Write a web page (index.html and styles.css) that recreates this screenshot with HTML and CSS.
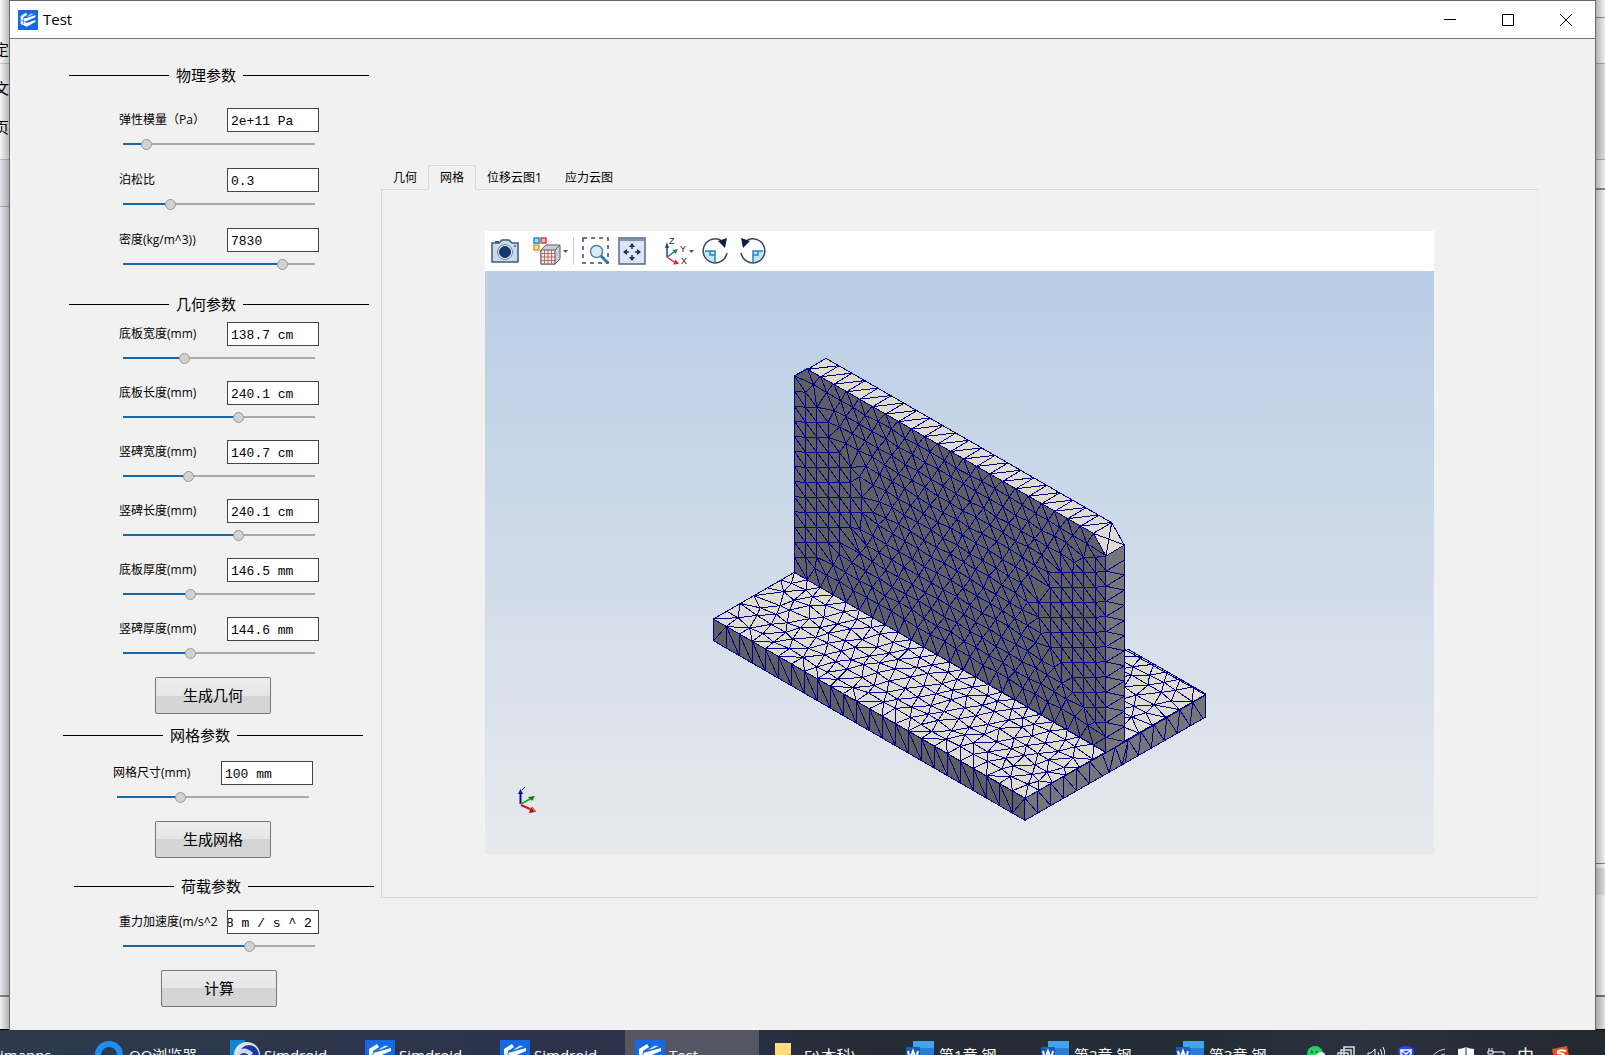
FILE: index.html
```html
<!DOCTYPE html>
<html lang="zh-CN">
<head>
<meta charset="utf-8">
<title>Test</title>
<link rel="stylesheet" href="styles.css">
</head>
<body>
<svg class="defs" width="0" height="0" aria-hidden="true">
  <symbol id="logo" viewBox="0 0 30 30">
    <rect width="30" height="30" fill="#1668e3"/>
    <path d="M4 9l8-5 2 3-6 4v2l18-5v3L12 17v3l14-5v3l-13 7-9-4z" fill="#fff"/>
    <path d="M8 13v8M4 15l9 3M12 10l8-5 5 1-9 4z" stroke="#1668e3" fill="#dbe9ff"/>
  </symbol>
  <symbol id="word" viewBox="0 0 30 30">
    <path d="M8 1h21v28H8z" fill="#2b7cd3"/>
    <path d="M8 1h21v7H8z" fill="#41a5ee"/>
    <path d="M1 7h14v15H1z" fill="#185abd"/>
    <path d="M3 11l2 8 3-8 3 8 2-8" fill="none" stroke="#fff" stroke-width="2"/>
  </symbol>
</svg>

<div class="desktop">
  <div class="behind behind-left"><span>定</span><span>文</span><span>页</span></div>

  <main class="window">
    <header class="titlebar">
      <svg class="app-icon"><use href="#logo"/></svg>
      <h1>Test</h1>
      <button class="win-btn" aria-label="最小化"><svg width="12" height="12"><path d="M0 5.500h12" stroke="#000"/></svg></button>
      <button class="win-btn" aria-label="最大化"><svg width="12" height="12"><path d="M.5.5h11v11H.5z" stroke="#000" fill="none"/></svg></button>
      <button class="win-btn" aria-label="关闭"><svg width="12" height="12"><path d="M0 0l12 12M12 0L0 12" stroke="#000"/></svg></button>
    </header>

    <div class="content">
      <form class="params">
        <section class="group group-physics">
          <h2>物理参数</h2>
          <div class="fields">
            <div class="field"><label for="e">弹性模量（Pa）</label><input class="box" id="e" value="2e+11 Pa"><input type="range" aria-label="弹性模量" value="10" style="--v:10"></div>
            <div class="field"><label for="p">泊松比</label><input class="box" id="p" value="0.3"><input type="range" aria-label="泊松比" value="23" style="--v:23"></div>
            <div class="field"><label for="d">密度(kg/m^3))</label><input class="box" id="d" value="7830"><input type="range" aria-label="密度" value="85" style="--v:85"></div>
          </div>
        </section>
        <section class="group group-geometry">
          <h2>几何参数</h2>
          <div class="fields">
            <div class="field"><label for="g1">底板宽度(mm)</label><input class="box" id="g1" value="138.7 cm"><input type="range" aria-label="底板宽度" value="31" style="--v:31"></div>
            <div class="field"><label for="g2">底板长度(mm)</label><input class="box" id="g2" value="240.1 cm"><input type="range" aria-label="底板长度" value="61" style="--v:61"></div>
            <div class="field"><label for="g3">竖碑宽度(mm)</label><input class="box" id="g3" value="140.7 cm"><input type="range" aria-label="竖碑宽度" value="33" style="--v:33"></div>
            <div class="field"><label for="g4">竖碑长度(mm)</label><input class="box" id="g4" value="240.1 cm"><input type="range" aria-label="竖碑长度" value="61" style="--v:61"></div>
            <div class="field"><label for="g5">底板厚度(mm)</label><input class="box" id="g5" value="146.5 mm"><input type="range" aria-label="底板厚度" value="34" style="--v:34"></div>
            <div class="field"><label for="g6">竖碑厚度(mm)</label><input class="box" id="g6" value="144.6 mm"><input type="range" aria-label="竖碑厚度" value="34" style="--v:34"></div>
          </div>
          <button type="button" class="action">生成几何</button>
        </section>
        <section class="group group-mesh">
          <h2>网格参数</h2>
          <div class="fields">
            <div class="field"><label for="m">网格尺寸(mm)</label><input class="box" id="m" value="100 mm"><input type="range" aria-label="网格尺寸" value="32" style="--v:32"></div>
          </div>
          <button type="button" class="action">生成网格</button>
        </section>
        <section class="group group-load">
          <h2>荷载参数</h2>
          <div class="fields">
            <div class="field"><label for="a">重力加速度(m/s^2</label><input class="box box-scrolled" id="a" value="8 m / s ^ 2"><input type="range" aria-label="重力加速度" value="67" style="--v:67"></div>
          </div>
          <button type="button" class="action">计算</button>
        </section>
      </form>

      <div class="workspace">
        <nav class="tabs" role="tablist">
          <button role="tab">几何</button>
          <button role="tab" class="active" aria-selected="true">网格</button>
          <button role="tab">位移云图1</button>
          <button role="tab">应力云图</button>
        </nav>
        <div class="tab-panel">
          <div class="toolbar">
            <button aria-label="截图"><svg width="28" height="28" viewBox="0 0 28 28">
              <path d="M1 6h7l3-3h7l3 3h6v19H1z" fill="#c9dcee" stroke="#42557c" stroke-width="1.500"/>
              <path d="M4 6V4h4v2" fill="#42557c"/><circle cx="14" cy="15" r="7.500" fill="#eaf3fb" stroke="#6d83a6"/><circle cx="14" cy="15" r="5.500" fill="#12386f" stroke="#1c2f57"/><circle cx="24" cy="9" r="1" fill="#42557c"/></svg></button>
            <button class="tool-cube" aria-label="显示模式"><svg width="36" height="28" viewBox="0 0 36 28">
              <path d="M1 1h5v5H1z" fill="#a6dcf7" stroke="#1d8fd1" stroke-width="1.500"/><path d="M8 1h5v5H8z" fill="#f7b9b4" stroke="#d64545" stroke-width="1.500"/><path d="M1 8h5v5H1z" fill="#fbe3a2" stroke="#e8982c" stroke-width="1.500"/>
              <path d="M8 13l5-5h14v14l-5 5H8z" fill="#c9cdd4" stroke="#5b606a"/><path d="M8 13h14v14H8zM22 13l5-5" fill="#f6e6e2" stroke="#5b606a"/>
              <path d="M11.500 13v14M15 13v14M18.500 13v14M8 16.500h14M8 20h14M8 23.500h14" stroke="#a8585c" stroke-width=".8"/><path d="M30 13h5l-2.500 3z" fill="#555"/></svg></button>
            <button aria-label="框选缩放"><svg width="28" height="28" viewBox="0 0 28 28">
              <path d="M1 1h25v25H1z" fill="none" stroke="#3a4768" stroke-width="1.500" stroke-dasharray="4 4"/>
              <path d="M18 18l8 8" stroke="#2a78ad" stroke-width="3"/><circle cx="14.500" cy="14.500" r="6" fill="#d8ecfa" stroke="#5580aa" stroke-width="1.500"/></svg></button>
            <button aria-label="适应窗口"><svg width="28" height="28" viewBox="0 0 28 28">
              <path d="M1 1h26v26H1z" fill="#dbe5f3" stroke="#56688d" stroke-width="1.500"/><path d="M1 3h26" stroke="#7f93b5" stroke-width="2"/>
              <path d="M14 7v5M14 18v5M6 15h5M17 15h5" stroke="#1c2f57" stroke-width="1.500"/><path d="M14 6l3 4h-6zM14 24l3-4h-6zM5 15l4-3v6zM23 15l-4-3v6z" fill="#1c2f57"/></svg></button>
            <button class="tool-axes" aria-label="视图方向"><svg width="32" height="28" viewBox="0 0 32 28">
              <path d="M5 20V9" stroke="#2a3c8a" stroke-width="1.500"/><path d="M5 5l2 6H3z" fill="#2a3c8a"/><path d="M5 20l7-5" stroke="#1b8a4a" stroke-width="1.500"/><path d="M16 12l-2.500 5-3-4z" fill="#1b8a4a"/>
              <path d="M5 20l7 5" stroke="#e01f35" stroke-width="1.500"/><path d="M17 27l-6 .5 2.500-5z" fill="#e01f35"/>
              <text x="7" y="7" class="axis-label">Z</text><text x="18" y="15" class="axis-label">Y</text><text x="19" y="27" class="axis-label">X</text><path d="M27 13h5l-2.500 3z" fill="#555"/></svg></button>
            <button aria-label="顺时针旋转"><svg width="28" height="28" viewBox="0 0 28 28">
              <path d="M2 14h11v11A12 12 0 0 1 2 14z" fill="#bfe6fa"/><path d="M3 14h10v11M8 14v4h5" fill="none" stroke="#2a82b8" stroke-width="1.500"/>
              <path d="M25 16A12 12 0 1 1 20 4" fill="none" stroke="#33466f" stroke-width="1.500"/><path d="M16 4l9-3-2 10z" fill="#12203f"/></svg></button>
            <button aria-label="逆时针旋转"><svg width="28" height="28" viewBox="0 0 28 28">
              <path d="M26 14H15v11A12 12 0 0 0 26 14z" fill="#bfe6fa"/><path d="M25 14H15v11M20 14v4h-5" fill="none" stroke="#2a82b8" stroke-width="1.500"/>
              <path d="M3 16A12 12 0 1 0 8 4" fill="none" stroke="#33466f" stroke-width="1.500"/><path d="M12 4L3 1l2 10z" fill="#12203f"/></svg></button>
          </div>
          <svg class="scene" viewBox="485 271 949 583" role="img" aria-label="网格模型">
            <g id="model" transform="translate(700 340) scale(.333333)"></g>
            <g stroke-width="2" fill="none">
              <path d="M520.500 804V792" stroke="#0b0ba8"/><path d="M518 794l2.500-5 2.500 5z" fill="#0b0ba8"/><path d="M522 790l3-3" stroke="#0b0ba8" stroke-width="1"/>
              <path d="M521 804l9-5" stroke="#12b012"/><path d="M535 796l-3 5-4-4z" fill="#0a7d12"/>
              <path d="M521 805l9 4" stroke="#e01010"/><path d="M535 812l-6 1 2-6z" fill="#b00d0d"/><path d="M532 807l4 5" stroke="#e01010" stroke-width="1"/>
            </g>
          </svg>
        </div>
      </div>
    </div>
  </main>

  <div class="behind behind-right"></div>
</div>

<footer class="taskbar">
  <a href="#" class="task task-first">imapps</a>
  <a href="#" class="task"><svg viewBox="0 0 30 30"><circle cx="14" cy="15" r="11" fill="none" stroke="#1e90f5" stroke-width="6"/></svg>QQ浏览器</a>
  <a href="#" class="task"><svg viewBox="0 0 30 30"><path d="M0 0h15v15H0z" fill="#0e86d4"/><circle cx="17" cy="15" r="13" fill="#dfe3ee"/><circle cx="19" cy="15" r="10" fill="#1539a0"/><path d="M6 13q8-9 17 0l-6 9z" fill="#cfd8ee"/><circle cx="14" cy="19" r="6" fill="#27407c"/></svg>Simdroid</a>
  <a href="#" class="task"><svg><use href="#logo"/></svg>Simdroid</a>
  <a href="#" class="task"><svg><use href="#logo"/></svg>Simdroid</a>
  <a href="#" class="task task-active"><svg><use href="#logo"/></svg>Test</a>
  <a href="#" class="task"><svg viewBox="0 0 30 30"><path d="M5 3h16v26H5z" fill="#fbdc80"/><path d="M17 14h4v15h-4z" fill="#e9bd4d"/></svg>F:\本科\</a>
  <a href="#" class="task"><svg><use href="#word"/></svg>第1章 钢</a>
  <a href="#" class="task"><svg><use href="#word"/></svg>第2章 钢</a>
  <a href="#" class="task"><svg><use href="#word"/></svg>第3章 钢</a>
  <div class="tray">
    <svg viewBox="0 0 18 18"><circle cx="8" cy="8" r="8" fill="#2ecc5f"/><circle cx="5" cy="6" r="1" fill="#154"/><circle cx="10" cy="6" r="1" fill="#154"/><circle cx="14" cy="12" r="6" fill="#e8f0e8"/></svg>
    <svg viewBox="0 0 18 18"><path d="M7 1h10v10H7zM4 4h10v10H4zM1 7h10v10H1z" fill="#2b3038" stroke="#ddd" stroke-width="1.500"/><path d="M3 9h7v7H3z" fill="#4aa3df"/></svg>
    <svg viewBox="0 0 18 18"><path d="M1 7h3l4-4v13l-4-4H1zM11 6q2 3 0 7M13 3q4 6 0 13M16 1q4 8 0 17" fill="none" stroke="#fff"/></svg>
    <svg viewBox="0 0 18 18"><path d="M9 0q5 0 8 3 0 10-8 14Q1 13 1 3q3-3 8-3z" fill="#2a48f0"/><path d="M4 4h10v4l-5 5-5-5zM5 5l4 3 4-3" fill="none" stroke="#fff" stroke-width="1.500"/></svg>
    <svg viewBox="0 0 18 18"><path d="M5 18Q4 5 18 3M9 18q0-9 9-10M13 18q0-5 5-6" fill="none" stroke="#ccc"/></svg>
    <svg viewBox="0 0 18 18"><path d="M9 1q4 2 8 2v8q-3 5-8 7-5-2-8-7V3q4 0 8-2z" fill="#fff"/><path d="M9 1v17M0 10h18" stroke="#222a33"/></svg>
    <svg viewBox="0 0 18 18"><path d="M6 6h11v9H3v-4M2 2v3M5 2v3M1 5h5v3H1z" fill="none" stroke="#fff"/></svg>
    <span>中</span>
    <svg class="tray-last" viewBox="0 0 18 18"><path d="M0 3l15-3 3 15-15 3z" fill="#e8502a"/><path d="M14 5Q5 3 6 7q8 0 6 6H5" fill="none" stroke="#fff" stroke-width="2"/></svg>
  </div>
</footer>
<script src="mesh.js"></script>
</body>
</html>
```
FILE: styles.css
```css
* { box-sizing: border-box; }

body {
  margin: 0;
  height: 100vh;
  display: flex;
  flex-direction: column;
  overflow: hidden;
  background: #2b3140;
  color: #000;
  font: 12px/16px "Open Sans", "Noto Sans CJK SC", sans-serif;
}

button, input { font: inherit; color: inherit; }
button { background: none; border: 0; padding: 0; }
.defs { position: absolute; }

.desktop { flex: 1; display: flex; min-height: 0; }

/* windows showing past the edges */
.behind { width: 9px; overflow: hidden; border-bottom: 1px solid #000; }
.behind-left {
  display: flex;
  flex-direction: column;
  align-items: flex-end;
  padding-top: 39px;
  gap: 19px;
  font-size: 15px;
  line-height: 20px;
  background:
    linear-gradient(90deg, transparent, rgba(0, 0, 0, .25)),
    linear-gradient(#fafafa 63px, #c8c8c8 63px 64px, #f6f6f6 64px 159px, #c0c0c0 159px 160px, #e2e4e8 160px 206px, #aaa 206px 207px, #e6e8ec 207px 995px, #888 995px 997px, #f0f0f0 997px);
}
.behind-right {
  background:
    linear-gradient(270deg, transparent, rgba(0, 0, 0, .25)),
    linear-gradient(#f4f4f4 17px, #888 17px 18px, #f0f0f0 18px 63px, #aaa 63px 64px, #dedede 64px 159px, #aaa 159px 160px, #f0f0f0 160px 188px, #888 188px 190px, #f2f2f2 190px 863px, #888 863px 864px, #f4f4f4 864px 868px, #dadce2 868px 895px, #f2f2f2 895px 995px, #777 995px 997px, #e0e1e5 997px);
}

.window {
  flex: 1;
  display: flex;
  flex-direction: column;
  min-width: 0;
  background: #f1f1f1;
  border: solid #6b6b6b;
  border-width: 1px 1px 0;
}

.titlebar {
  display: flex;
  align-items: center;
  height: 38px;
  padding-left: 8px;
  background: #fff;
  border-bottom: 1px solid #777;
}
.app-icon { width: 20px; height: 20px; }
.titlebar h1 { flex: 1; margin: 0 0 2px 5px; font-size: 15px; font-weight: 400; line-height: 20px; }
.win-btn { width: 58px; height: 36px; display: grid; place-items: center; }

.content { flex: 1; display: flex; min-height: 0; }

/* parameter column */
.params { width: 371px; padding-top: 26px; }
.group h2 {
  display: flex;
  align-items: center;
  gap: 7px;
  width: 300px;
  margin: 0 0 0 59px;
  font-size: 15px;
  line-height: 20px;
  font-weight: 400;
}
.group h2::before, .group h2::after { content: ""; height: 1px; background: #000; }
.group h2::before { width: 100px; }
.group h2::after { flex: 1; }
.fields { display: flex; flex-direction: column; margin-left: 109px; }
.field { display: grid; grid-template-columns: 108px 92px; grid-template-rows: 24px 24px; }
.field label { line-height: 24px; white-space: nowrap; }
.box {
  width: 92px;
  height: 24px;
  padding: 2px 3px 0;
  border: 1px solid #444;
  background: #fff;
  font: 13px "Liberation Mono", monospace;
}
.box-scrolled { padding-left: 0; text-indent: -2px; }

.field input[type=range] {
  grid-column: 1 / -1;
  width: 192px;
  height: 24px;
  margin: 0 0 0 4px;
  appearance: none;
  background: linear-gradient(90deg, #1a66ad calc(var(--v) * 1%), #aaa 0) center / 100% 2px no-repeat;
}
.field input[type=range]::-webkit-slider-thumb {
  appearance: none;
  width: 11px;
  height: 11px;
  border: 1px solid #999;
  border-radius: 50%;
  background: #d2d2d2;
}

.group-physics .fields { margin-top: 23px; gap: 12px; }
.group-geometry { margin-top: 18px; }
.group-geometry .fields { margin-top: 8px; gap: 11px; }
.group-mesh { margin-top: 11px; }
.group-mesh h2 { margin-left: 53px; }
.group-mesh .fields { margin: 16px 0 0 103px; }
.group-load { margin-top: 18px; }
.group-load h2 { margin-left: 64px; }
.group-load .fields { margin-top: 14px; }

.action {
  display: block;
  width: 116px;
  height: 37px;
  margin: 12px 0 0 145px;
  padding-bottom: 2px;
  border: 1px solid #777;
  border-radius: 2px;
  background: linear-gradient(#ededed, #e6e6e6 50%, #d4d4d4 50%, #d6d6d6);
  font-size: 15px;
}
.group-load .action { margin-left: 151px; }

/* result tabs */
.workspace { flex: 1; min-width: 0; padding: 126px 57px 0 0; }
.tabs { display: flex; height: 25px; margin-bottom: -1px; }
.tabs button { padding: 0 11px; line-height: 24px; border: solid transparent; border-width: 1px 1px 0; margin-right: -1px; }
.tabs button.active { border-color: #d9d9d9; background: #f1f1f1; }
.tab-panel { padding: 41px 103px 43px; border: 1px solid #d9d9d9; border-right-color: #ececec; }

.toolbar { display: flex; align-items: center; gap: 8px; height: 40px; padding-left: 6px; background: #fff; }
.toolbar button { display: flex; }
.toolbar .tool-cube { padding: 0 4px 0 6px; border-right: 1px solid #c9c9c9; }
.toolbar .tool-axes { padding-left: 8px; }
.axis-label { font: 9px "Liberation Sans", sans-serif; fill: #222; }

.scene { display: block; width: 100%; background: linear-gradient(#b9cde5, #e7e9ed); }
.face { stroke: none; }
.mesh { fill: none; stroke: #00008b; vector-effect: non-scaling-stroke; stroke-width: 1px; shape-rendering: crispEdges; }

/* taskbar */
.taskbar {
  display: flex;
  gap: 1px;
  height: 25px;
  overflow: hidden;
  background: linear-gradient(90deg, #2c3a4c, #2c324a 40%, #262c35 55%, #252d36 75%, #2b3240 85%, #23282f);
  color: #fff;
  font-size: 15px;
  line-height: 30px;
}
.task { display: flex; flex: none; gap: 4px; width: 134px; height: 50px; padding: 10px 0 0 10px; color: inherit; text-decoration: none; }
.task svg { width: 30px; height: 30px; flex: none; }
.task-first { width: 84px; padding-left: 0; }
.task-active { background: #545662; }
.tray { display: flex; gap: 12px; margin-left: auto; padding: 16px 35px 0 0; line-height: 20px; }
.tray svg, .tray span { width: 18px; height: 18px; font-size: 17px; }
.tray .tray-last { margin-left: 5px; }
```
FILE: mesh.js
```js
// Surface mesh of the T-shaped part. One unit is one 100 mm element edge.
(function () {
  var model = document.getElementById('model');
  var seed = 7;
  function rnd() { seed = (seed * 16807) % 2147483647; return seed / 2147483647 - 0.5; }

  function add(d, cls, fill) {
    var p = document.createElementNS('http://www.w3.org/2000/svg', 'path');
    p.setAttribute('d', d);
    p.setAttribute('class', cls);
    if (fill) p.setAttribute('fill', fill);
    model.appendChild(p);
  }
  function face(points, fill) {
    var d = 'M' + points.join('L') + 'Z';
    add(d, 'face', fill);
    add(d, 'mesh');
  }

  // Bowyer-Watson triangulation
  function triangulate(pts) {
    var n = pts.length;
    var p = pts.concat([[-500, -400], [500, -400], [0, 800]]);
    function tri(a, b, c) {
      var A = p[a], B = p[b], C = p[c];
      var D = 2 * (A[0] * (B[1] - C[1]) + B[0] * (C[1] - A[1]) + C[0] * (A[1] - B[1]));
      var a2 = A[0] * A[0] + A[1] * A[1], b2 = B[0] * B[0] + B[1] * B[1], c2 = C[0] * C[0] + C[1] * C[1];
      var x = (a2 * (B[1] - C[1]) + b2 * (C[1] - A[1]) + c2 * (A[1] - B[1])) / D;
      var y = (a2 * (C[0] - B[0]) + b2 * (A[0] - C[0]) + c2 * (B[0] - A[0])) / D;
      return { v: [a, b, c], x: x, y: y, r: (A[0] - x) * (A[0] - x) + (A[1] - y) * (A[1] - y) };
    }
    var ts = [tri(n, n + 1, n + 2)];
    for (var i = 0; i < n; i++) {
      var edges = {}, keep = [];
      ts.forEach(function (t) {
        var dx = p[i][0] - t.x, dy = p[i][1] - t.y;
        if (dx * dx + dy * dy < t.r) {
          for (var k = 0; k < 3; k++) {
            var a = t.v[k], b = t.v[(k + 1) % 3];
            var key = Math.min(a, b) + ',' + Math.max(a, b);
            edges[key] = (edges[key] || 0) + 1;
          }
        } else keep.push(t);
      });
      Object.keys(edges).forEach(function (key) {
        if (edges[key] === 1) {
          var e = key.split(',').map(Number);
          keep.push(tri(e[0], e[1], i));
        }
      });
      ts = keep;
    }
    var out = {};
    ts.forEach(function (t) {
      for (var k = 0; k < 3; k++) {
        var a = t.v[k], b = t.v[(k + 1) % 3];
        if (a < n && b < n) out[Math.min(a, b) + ',' + Math.max(a, b)] = [a, b];
      }
    });
    return Object.keys(out).map(function (k) { return out[k]; });
  }
  function drawMesh(pts, project) {
    add(triangulate(pts).map(function (e) {
      return 'M' + project(pts[e[0]]) + 'L' + project(pts[e[1]]);
    }).join(''), 'mesh');
  }
  // add a point unless it crowds one already there
  function tryAdd(pts, u, v, min) {
    for (var i = 0; i < pts.length; i++) {
      if (Math.hypot(pts[i][0] - u, pts[i][1] - v) < min) return;
    }
    pts.push([u, v]);
  }
  // evenly spaced points round a polygon; tiny noise breaks ties
  function border(pts, corners) {
    corners.forEach(function (a, i) {
      var b = corners[(i + 1) % corners.length];
      var n = Math.max(1, Math.round(Math.hypot(b[0] - a[0], b[1] - a[1])));
      for (var k = 0; k < n; k++) {
        pts.push([a[0] + (b[0] - a[0]) * k / n + rnd() * 1e-5, a[1] + (b[1] - a[1]) * k / n + rnd() * 1e-5]);
      }
    });
  }

  function base(p) { return [40 + 39 * p[0] + 40.5 * p[1], 837 + 22.4 * p[0] - 23.3 * p[1]]; }
  function wall(p) { return [283 + 39 * p[0], 697 + 22.5 * p[0] - 45 * p[1]]; }

  function plate(a0, a1, b0, b1) {
    var pts = [];
    border(pts, [[a0, b0], [a1, b0], [a1, b1], [a0, b1]]);
    for (var j = 1; b0 + j * 0.866 < b1 - 0.4; j++) {
      for (var a = a0 + 0.5 + (j % 2) * 0.5; a < a1 - 0.4; a++) {
        tryAdd(pts, a + rnd() * 0.4, b0 + j * 0.866 + rnd() * 0.3, 0.6);
      }
    }
    drawMesh(pts, base);
  }

  var light = '#e0dcd2', dark = '#5f5f62', mid = '#767678';

  // base plate, top
  face([[1042, 1068], [1273, 928], [1517, 1065], [1273, 1207]], light);
  plate(18, 24, 7.4, 13.4);
  face([[40, 837], [283, 697], [1218, 1238], [975, 1375]], light);
  plate(0, 24, 0, 6);

  // base plate, long side
  face([[40, 837], [975, 1375], [975, 1441], [40, 902]], dark);
  var d = '';
  for (var i = 0; i < 24; i++) {
    var x = 40 + 39 * i, y = 837 + 22.4 * i;
    d += 'M' + [x, y] + 'v66';
    d += i === 0 || i === 23 ? 'M' + [x, y + 66] + 'L' + [x + 39, y + 22] : 'M' + [x, y] + 'L' + [x + 39, y + 88];
  }
  add(d, 'mesh');

  // base plate, short side
  face([[975, 1375], [1218, 1238], [1273, 1207], [1517, 1065], [1517, 1131], [975, 1441]], mid);
  d = '';
  for (i = 0; i < 14; i++) {
    x = 975 + 38.7 * i; y = 1375 - 22.1 * i;
    if (i < 6) d += 'M' + [x, y] + 'v66M' + [x, y] + 'L' + [x + 38.7, y + 44];
    else if (i < 8) d += 'M' + [x, y] + 'l20,55l19,-77';
    else d += 'M' + [x, y] + 'l-8,70M' + [x, y] + 'L' + [x + 31, y + 48];
  }
  add(d, 'mesh');

  // wall, broad face
  face([[283, 108], [323, 88], [1180, 580], [1218, 648], [1218, 1238], [283, 697]], dark);
  var pts = [];
  border(pts, [[0, 0], [24, 0], [24, 13.1], [23, 14.1], [1, 14.1], [0, 13.1]]);
  function wedge(v) { return 0.6 + Math.min(v, 14 - v) * 0.8; }
  var u, v, j, k;
  for (k = 1; k < 8; k++) {
    for (j = -8; j < 22; j++) {
      u = 0.866 * k; v = j + 0.433 * k;
      if (v > 0.4 && v < 13.4 && u < wedge(v)) tryAdd(pts, u, v, 0.65);
      u = 24 - 0.866 * k; v = j - 0.433 * k;
      if (v > 0.4 && v < 13.4 && 24 - u < wedge(v)) tryAdd(pts, u, v, 0.65);
    }
  }
  for (j = 1; j < 17; j++) {
    for (k = 0; k < 25; k++) {
      v = 14.1 - 0.866 * j; u = k + (j % 2) * 0.5 + rnd() * 0.16;
      if (v > 0.4 && u > 0.5 && u < 23.5) tryAdd(pts, u, v + rnd() * 0.16, 0.72);
    }
  }
  drawMesh(pts, wall);

  // wall, top edge and chamfer
  face([[323, 88], [378, 55], [1235, 548], [1180, 580]], light);
  d = '';
  for (i = 0; i < 22; i++) {
    x = 323 + 39 * i; y = 88 + 22.4 * i;
    d += 'M' + [x, y] + 'l55,-33M' + [x, y] + 'l94,-11';
  }
  add(d, 'mesh');
  face([[1180, 580], [1235, 548], [1273, 615], [1218, 648]], light);
  add('M1180,580L1273,615M1235,548L1218,648', 'mesh');

  // wall, narrow side
  face([[1218, 648], [1273, 615], [1273, 1207], [1218, 1238]], mid);
  d = '';
  for (i = 0; i < 13; i++) {
    y = 648 + 45.4 * i;
    d += 'M' + [1218, y + 45.4] + 'L' + [1273, y + 12];
    if (i < 12) d += 'M' + [1218, y + 45.4] + 'L' + [1273, y + 57];
  }
  add(d, 'mesh');
})();
```
